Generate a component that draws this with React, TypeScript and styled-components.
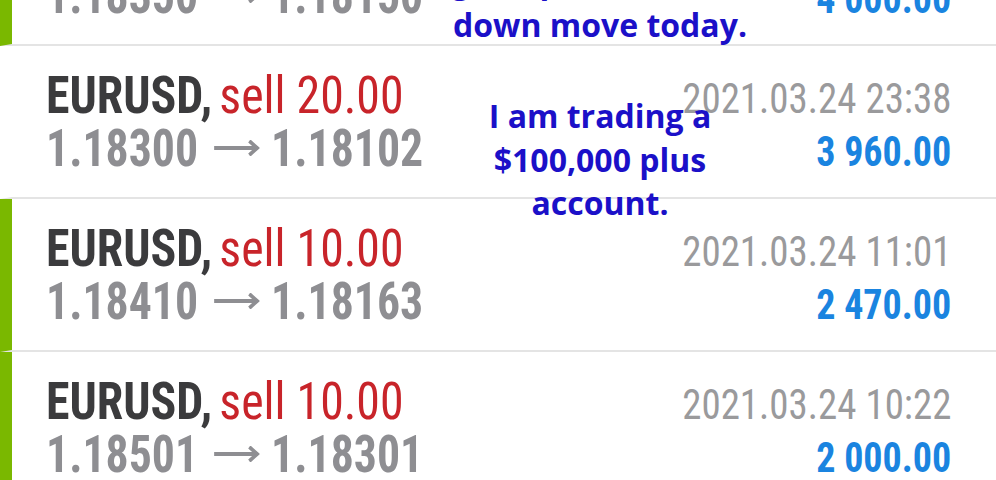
import React from "react";
import styled, { createGlobalStyle } from "styled-components";

const GlobalStyle = createGlobalStyle`
  html, body {
    margin: 0;
    padding: 0;
    background: #fff;
  }
`;

const Screen = styled.div`
  position: relative;
  width: 996px;
  height: 480px;
  overflow: hidden;
  background: #fff;
  font-family: "Roboto Condensed", Roboto, "Liberation Sans", sans-serif;
  font-stretch: condensed;
`;

const List = styled.div`
  display: flex;
  flex-direction: column;
  margin-top: -107px;
`;

const Row = styled.div<{ $marked: boolean }>`
  box-sizing: border-box;
  height: 153px;
  display: flex;
  flex-direction: column;
  padding: 23px 45px 0 34px;
  border-left: 12px solid ${(p) => (p.$marked ? "#7ab800" : "#fff")};
  border-bottom: 2px solid #e4e4e4;
`;

const Line = styled.div`
  display: flex;
  justify-content: space-between;
  align-items: baseline;
  height: 53px;
  line-height: 53px;
  white-space: nowrap;
`;

// the reference type is narrower than Roboto Condensed, so squeeze each text block
const Squeeze = styled.span<{ $x: number; $from: "left" | "right" }>`
  display: inline-block;
  transform: scaleX(${(p) => p.$x});
  transform-origin: ${(p) => p.$from} center;
`;

const Symbol = styled.span`
  font-size: 52px;
  font-weight: 700;
  color: #3b3b3d;
`;

const Side = styled.span`
  margin-left: 4px;
  font-size: 52px;
  font-weight: 400;
  color: #c8242a;
`;

const Prices = styled.span`
  font-size: 52px;
  font-weight: 700;
  color: #8e8e92;
`;

const Arrow = styled.svg`
  width: 52px;
  height: 16px;
  margin: 0 13px 0 18px;
  vertical-align: 10px;
`;

const Time = styled.span`
  font-size: 42px;
  font-weight: 400;
  color: #9a9a9c;
`;

const Profit = styled.span`
  font-size: 42px;
  font-weight: 700;
  color: #1a84e0;
`;

const Note = styled.div<{ $top: number }>`
  position: absolute;
  left: 600px;
  top: ${(p) => p.$top}px;
  transform: translateX(-50%);
  font-family: "Open Sans", "Noto Sans", sans-serif;
  font-stretch: normal;
  font-size: 32px;
  font-weight: 700;
  line-height: 43.5px;
  color: #1b10c8;
  text-align: center;
  white-space: nowrap;
`;

type Deal = {
  side: string;
  open: string;
  close: string;
  time: string;
  profit: string;
  marked: boolean;
};

const deals: Deal[] = [
  { side: "sell 20.00", open: "1.18350", close: "1.18150", time: "2021.03.25 01:47", profit: "4 000.00", marked: true },
  { side: "sell 20.00", open: "1.18300", close: "1.18102", time: "2021.03.24 23:38", profit: "3 960.00", marked: false },
  { side: "sell 10.00", open: "1.18410", close: "1.18163", time: "2021.03.24 11:01", profit: "2 470.00", marked: true },
  { side: "sell 10.00", open: "1.18501", close: "1.18301", time: "2021.03.24 10:22", profit: "2 000.00", marked: true },
];

const RightArrow = () => (
  <Arrow viewBox="0 0 52 16" fill="none" stroke="#8e8e92" strokeWidth="4">
    <path d="M0 8H49" />
    <path d="M40 1L49 8L40 15" strokeLinejoin="miter" />
  </Arrow>
);

export default function App() {
  return (
    <>
      <GlobalStyle />
      <Screen>
        <List>
          {deals.map((d, i) => (
            <Row key={i} $marked={d.marked}>
              <Line>
                <Squeeze $x={0.92} $from="left">
                  <Symbol>EURUSD,</Symbol> <Side>{d.side}</Side>
                </Squeeze>
                <Squeeze $x={0.927} $from="right">
                  <Time>{d.time}</Time>
                </Squeeze>
              </Line>
              <Line>
                <Squeeze $x={0.88} $from="left">
                  <Prices>
                    {d.open}
                    <RightArrow />
                    {d.close}
                  </Prices>
                </Squeeze>
                <Squeeze $x={0.905} $from="right">
                  <Profit>{d.profit}</Profit>
                </Squeeze>
              </Line>
            </Row>
          ))}
        </List>
        <Note $top={-41}>
          got a profit on this
          <br />
          down move today.
        </Note>
        <Note $top={94}>
          I am trading a
          <br />
          $100,000 plus
          <br />
          account.
        </Note>
      </Screen>
    </>
  );
}
